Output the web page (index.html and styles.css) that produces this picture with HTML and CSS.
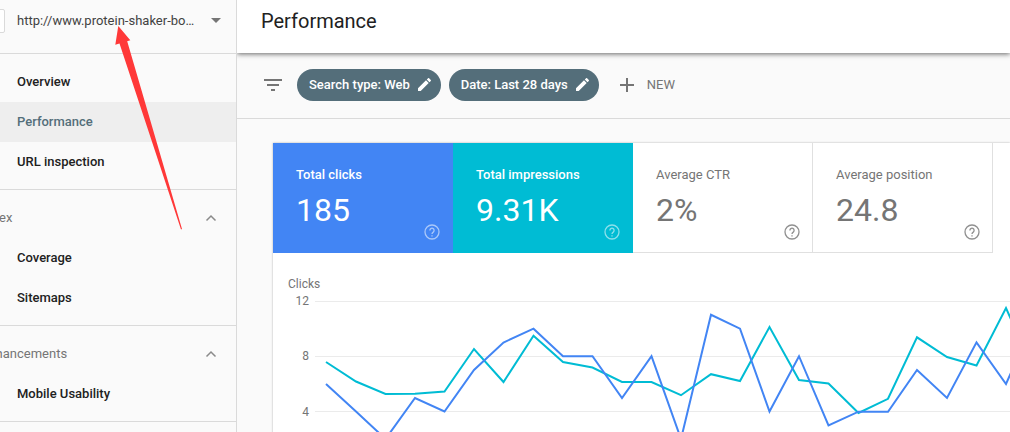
FILE: index.html
```html
<!DOCTYPE html>
<html lang="en">
<head>
<meta charset="utf-8">
<title>Performance</title>
<link rel="stylesheet" href="styles.css">
</head>
<body>
<div class="app">
  <aside class="sidebar">
    <div class="property">
      <span class="property-icon"></span>
      <button class="property-button" type="button">
        <span class="property-url">http://www.protein-shaker-bo…</span>
        <svg class="caret" width="10" height="5" viewBox="0 0 10 5" aria-hidden="true"><path d="M0 0h10L5 5z"/></svg>
      </button>
    </div>
    <nav>
      <div class="nav-group">
        <a class="nav-item" href="#overview">Overview</a>
        <a class="nav-item nav-item-active" href="#performance">Performance</a>
        <a class="nav-item" href="#inspect">URL inspection</a>
      </div>
      <div class="nav-group">
        <button class="nav-heading" type="button">Index
          <svg width="12" height="8" viewBox="0 0 12 8" aria-hidden="true"><path d="M1.500 6.500L6 2l4.500 4.500"/></svg>
        </button>
        <a class="nav-item" href="#coverage">Coverage</a>
        <a class="nav-item" href="#sitemaps">Sitemaps</a>
      </div>
      <div class="nav-group">
        <button class="nav-heading" type="button">Enhancements
          <svg width="12" height="8" viewBox="0 0 12 8" aria-hidden="true"><path d="M1.500 6.500L6 2l4.500 4.500"/></svg>
        </button>
        <a class="nav-item" href="#mobile">Mobile Usability</a>
      </div>
    </nav>
  </aside>
  <main class="main">
    <header class="title-bar"><h1>Performance</h1></header>
    <div class="filters">
      <svg class="filter-icon" width="18" height="12" viewBox="0 0 18 12" aria-hidden="true"><path d="M0 0h18v2H0zM3 5h12v2H3zM7 10h4v2H7z"/></svg>
      <button class="chip" type="button">Search type: Web
        <svg width="13" height="13" viewBox="3 3 18 18" aria-hidden="true"><path d="M3 17.250V21h3.750L17.810 9.940l-3.750-3.750L3 17.250zM20.710 7.040a1 1 0 0 0 0-1.410l-2.340-2.340a1 1 0 0 0-1.410 0l-1.830 1.830 3.750 3.750 1.830-1.830z"/></svg>
      </button>
      <button class="chip" type="button">Date: Last 28 days
        <svg width="13" height="13" viewBox="3 3 18 18" aria-hidden="true"><path d="M3 17.250V21h3.750L17.810 9.940l-3.750-3.750L3 17.250zM20.710 7.040a1 1 0 0 0 0-1.410l-2.340-2.340a1 1 0 0 0-1.410 0l-1.830 1.830 3.750 3.750 1.830-1.830z"/></svg>
      </button>
      <button class="new-button" type="button">
        <svg width="14" height="14" viewBox="0 0 14 14" aria-hidden="true"><path d="M6 0h2v6h6v2H8v6H6V8H0V6h6z"/></svg>NEW
      </button>
    </div>
    <section class="card">
      <div class="metrics">
        <button class="metric metric-clicks" type="button">
          <span class="metric-label">Total clicks</span><span class="metric-value">185</span>
          <svg class="help" width="16" height="16" viewBox="0 0 16 16" aria-hidden="true"><circle cx="8" cy="8" r="7"/><path d="M5.900 6.400a2.100 2.100 0 1 1 3.500 1.500C8.600 8.600 8 8.900 8 10M8 11.200v1.300"/></svg>
        </button>
        <button class="metric metric-impressions" type="button">
          <span class="metric-label">Total impressions</span><span class="metric-value">9.31K</span>
          <svg class="help" width="16" height="16" viewBox="0 0 16 16" aria-hidden="true"><circle cx="8" cy="8" r="7"/><path d="M5.900 6.400a2.100 2.100 0 1 1 3.500 1.500C8.600 8.600 8 8.900 8 10M8 11.200v1.300"/></svg>
        </button>
        <button class="metric" type="button">
          <span class="metric-label">Average CTR</span><span class="metric-value">2%</span>
          <svg class="help" width="16" height="16" viewBox="0 0 16 16" aria-hidden="true"><circle cx="8" cy="8" r="7"/><path d="M5.900 6.400a2.100 2.100 0 1 1 3.500 1.500C8.600 8.600 8 8.900 8 10M8 11.200v1.300"/></svg>
        </button>
        <button class="metric" type="button">
          <span class="metric-label">Average position</span><span class="metric-value">24.8</span>
          <svg class="help" width="16" height="16" viewBox="0 0 16 16" aria-hidden="true"><circle cx="8" cy="8" r="7"/><path d="M5.900 6.400a2.100 2.100 0 1 1 3.500 1.500C8.600 8.600 8 8.900 8 10M8 11.200v1.300"/></svg>
        </button>
      </div>
      <div class="chart">
        <svg class="plot" role="img" aria-label="Clicks and impressions by day">
          <text class="axis-title" x="15" y="35">Clicks</text>
          <g class="grid">
            <path d="M42 48.500H2000M42 103.500H2000M42 158.500H2000"/>
          </g>
          <g class="ticks">
            <text x="36" y="52">12</text>
            <text x="36" y="107">8</text>
            <text x="36" y="163">4</text>
          </g>
          <polyline class="line-impressions" points="53,109 83,128.500 112.500,141 142,140.700 171.500,138.500 201,96 230.500,129 260.500,82.700 290,109 319.500,114.500 349,129 378.500,129 408,142.200 438,121.200 467,128 496.500,74 526,127 555.500,130.500 585.500,160 615,145.800 644,84.300 674,104 703.500,112.500 733,55 745,82"/>
          <polyline class="line-clicks" points="53,131 83,158.500 112.500,186 142,145 171.500,158.500 201,117 230.500,89.500 260.500,75.700 290,103.200 319.500,103.200 349,145 378.500,103.200 408,186 438,61.800 467,75.700 496.500,158.500 526,103.200 555.500,172.500 585.500,158.700 615,158.700 644,117 674,145 703.500,89.300 733,131 745,104"/>
        </svg>
      </div>
    </section>
  </main>
  <svg class="arrow" width="68" height="204" viewBox="0 0 68 204" aria-hidden="true"><path d="M4.300 0L16.300 14.200L13.200 15.300L68 203L67 203.500L5.500 17.600L1.300 18.800z"/></svg>
</div>
</body>
</html>
```
FILE: styles.css
```css
* { box-sizing: border-box; }

body {
  margin: 0;
  font-family: Roboto, "Liberation Sans", sans-serif;
  font-size: 13px;
  color: #212121;
  background: #fafafa;
}

button {
  margin: 0;
  padding: 0;
  border: 0;
  background: none;
  font: inherit;
  color: inherit;
  text-align: left;
  cursor: pointer;
}

.app {
  position: relative;
  display: flex;
  height: 100vh;
  overflow: hidden;
}

.sidebar {
  flex: none;
  width: 271px;
  margin-left: -34px;
  border-right: 1px solid #dadada;
}

.property {
  display: flex;
  align-items: center;
  gap: 12px;
  height: 54px;
  padding: 0 15px 12px 15px;
  border-bottom: 1px solid #dadada;
}

.property-icon {
  width: 24px;
  height: 24px;
  border: 1px solid #dadada;
  border-radius: 2px;
  background: #fff;
}

.property-button {
  display: flex;
  flex: 1;
  align-items: center;
  justify-content: space-between;
  color: #424242;
}

.property-url { white-space: nowrap; }

.caret { flex: none; fill: #757575; }

.nav-group {
  padding: 8px 0 7px;
  border-bottom: 1px solid #dadada;
}

.nav-item {
  display: flex;
  align-items: center;
  height: 40px;
  padding: 0 0 2px 51px;
  font-weight: 500;
  color: #212121;
  text-decoration: none;
}

.nav-item-active {
  background: #eee;
  color: #546e7a;
}

.nav-heading {
  display: flex;
  align-items: center;
  justify-content: space-between;
  width: 100%;
  height: 40px;
  padding: 0 19px 2px 15px;
  color: #757575;
}

.nav-heading svg {
  margin-top: 2px;
  fill: none;
  stroke: #8a8a8a;
  stroke-width: 1.500;
}

.main { flex: 1; min-width: 0; }

.title-bar {
  position: relative;
  display: flex;
  align-items: center;
  height: 53px;
  padding: 0 24px 12px;
  background: #fff;
  box-shadow: 0 1px 5px rgba(0, 0, 0, .6);
  clip-path: inset(0 0 -8px 0);
}

h1 {
  margin: 0;
  font-size: 20px;
  font-weight: 400;
}

.filters {
  display: flex;
  align-items: center;
  gap: 8px;
  height: 66px;
  padding: 0 27px 2px;
  border-bottom: 1px solid #dadada;
}

.filter-icon { margin-right: 7px; fill: #757575; }

.chip {
  display: flex;
  align-items: center;
  gap: 8px;
  height: 32px;
  padding: 0 10px 0 12px;
  border-radius: 16px;
  background: #546e7a;
  color: #fff;
  font-weight: 500;
}

.chip svg { fill: #fff; }

.new-button {
  display: flex;
  align-items: center;
  gap: 13px;
  margin-left: 13px;
  color: #757575;
}

.new-button svg { fill: #757575; }

.card {
  height: 500px;
  margin: 24px 0 0 36px;
  background: #fff;
  box-shadow: 0 0 2px rgba(0, 0, 0, .3);
}

.metrics { display: flex; }

.metric {
  display: flex;
  flex-direction: column;
  width: 180px;
  height: 110px;
  padding: 23px 12px 12px 23px;
  border-right: 1px solid #e0e0e0;
  border-bottom: 1px solid #e0e0e0;
  color: #757575;
}

.metric-clicks {
  border-color: #4285f4;
  background: #4285f4;
  color: #fff;
}

.metric-impressions {
  border-color: #00bcd4;
  background: #00bcd4;
  color: #fff;
}

.metric-clicks .metric-label,
.metric-impressions .metric-label { font-weight: 500; }

.metric-label { line-height: 18px; }

.metric-value {
  margin-top: 7px;
  font-size: 32px;
  line-height: 38px;
}

.help {
  align-self: flex-end;
  flex: none;
  margin-top: -5px;
  fill: none;
  stroke: currentColor;
  stroke-width: 1.300;
  opacity: .8;
}

.metric-clicks .help,
.metric-impressions .help { opacity: .55; }

.plot {
  display: block;
  width: 100%;
  height: 300px;
  font-size: 12px;
  fill: #757575;
}

.ticks { text-anchor: end; }

.grid { stroke: #ebebeb; }

.line-clicks,
.line-impressions {
  fill: none;
  stroke-width: 2;
}

.line-clicks { stroke: #4285f4; }

.line-impressions { stroke: #00bcd4; }

.arrow {
  position: absolute;
  top: 26px;
  left: 114px;
  fill: #ff3838;
  pointer-events: none;
}
```
